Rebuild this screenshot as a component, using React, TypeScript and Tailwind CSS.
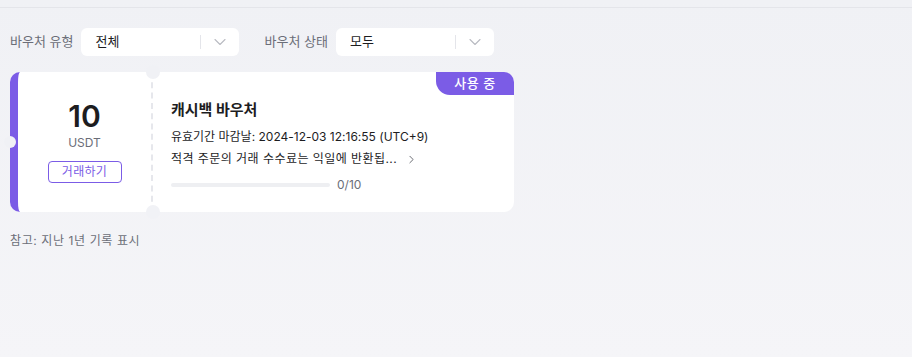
import { ChevronDown, ChevronRight } from 'lucide-react';

const FILTERS = [
	{ label: '바우처 유형', value: '전체' },
	{ label: '바우처 상태', value: '모두' },
];

function Select({ value }: { value: string }) {
	return (
		<div className="w-[158px] h-[28px] bg-white rounded-md flex items-center pl-[14px] pr-[9px]">
			<span className="flex-1 text-[13px] text-[#1d1d1f]">{value}</span>
			<span className="w-px h-[14px] bg-[#e4e5ea] mr-[9px]" />
			<ChevronDown className="w-[20px] h-[20px] text-[#b9bbc2]" strokeWidth={1.3} />
		</div>
	);
}

export default function App() {
	return (
		<div
			className="w-[912px] h-[357px] bg-gradient-to-b from-[#f0f1f5] to-[#f5f5f8] overflow-hidden"
			style={{ fontFamily: 'Inter, "Noto Sans CJK KR", sans-serif' }}
		>
			<div className="h-[8px] border-b border-[#e4e5ea]" />

			<div className="px-[10px] pt-[20px] flex items-center gap-[25px]">
				{FILTERS.map(f => (
					<div key={f.label} className="flex items-center gap-[8px]">
						<span className="text-[13px] text-[#6b6e78]">{f.label}</span>
						<Select value={f.value} />
					</div>
				))}
			</div>

			<div className="ml-[10px] mt-[16px] w-[504px] h-[140px] relative flex bg-white rounded-[10px]">
				<div className="w-[143px] shrink-0 border-l-[8px] border-[#7b5ce6] rounded-l-[10px] flex flex-col items-center pt-[26px] border-r-2 border-r-[#e6e7ec] [border-right-style:dashed]">
					<span className="text-[30px] leading-[36px] font-semibold text-[#1d1d1f]">10</span>
					<span className="text-[12px] leading-[16px] text-[#6b6e78] mt-[1px]">USDT</span>
					<button className="mt-[10px] w-[74px] h-[22px] rounded border border-[#7b5ce6] text-[12px] text-[#7b5ce6] tracking-[0.3px] flex items-center justify-center">
						거래하기
					</button>
				</div>

				<div className="flex-1 pl-[18px] pt-[28px]">
					<p className="text-[15px] leading-[20px] font-bold text-[#1d1d1f]">캐시백 바우처</p>
					<p className="mt-[9px] text-[12px] leading-[16px] text-[#1d1d1f]">유효기간 마감날: 2024-12-03 12:16:55 (UTC+9)</p>
					<div className="mt-[6px] flex items-center gap-[8px] text-[12px] leading-[16px] text-[#1d1d1f]">
						<span className="tracking-[0.45px]">적격 주문의 거래 수수료는 익일에 반환됩...</span>
						<ChevronRight className="w-[13px] h-[13px] text-[#4a4c55]" strokeWidth={1.5} />
					</div>
					<div className="mt-[9px] flex items-center gap-[7px]">
						<div className="w-[159px] h-[4px] rounded-full bg-[#eeeff2]" />
						<span className="text-[12px] text-[#6b6e78]">0/10</span>
					</div>
				</div>

				<div className="absolute top-0 right-0 w-[78px] h-[23px] bg-[#7b5ce6] rounded-bl-[14px] rounded-tr-[10px] flex items-center justify-center text-[13px] font-medium text-white tracking-[0.5px]">
					사용 중
				</div>

				<div className="absolute left-[136px] -top-[7px] w-[14px] h-[14px] rounded-full bg-[#f0f1f5]" />
				<div className="absolute left-[136px] -bottom-[7px] w-[14px] h-[14px] rounded-full bg-[#f1f2f6]" />
				<div className="absolute -left-[6px] top-[64px] w-[12px] h-[12px] rounded-full bg-[#f0f1f5]" />
			</div>

			<p className="ml-[10px] mt-[20px] text-[12px] text-[#6b6e78] tracking-[0.6px]">참고: 지난 1년 기록 표시</p>
		</div>
	);
}
